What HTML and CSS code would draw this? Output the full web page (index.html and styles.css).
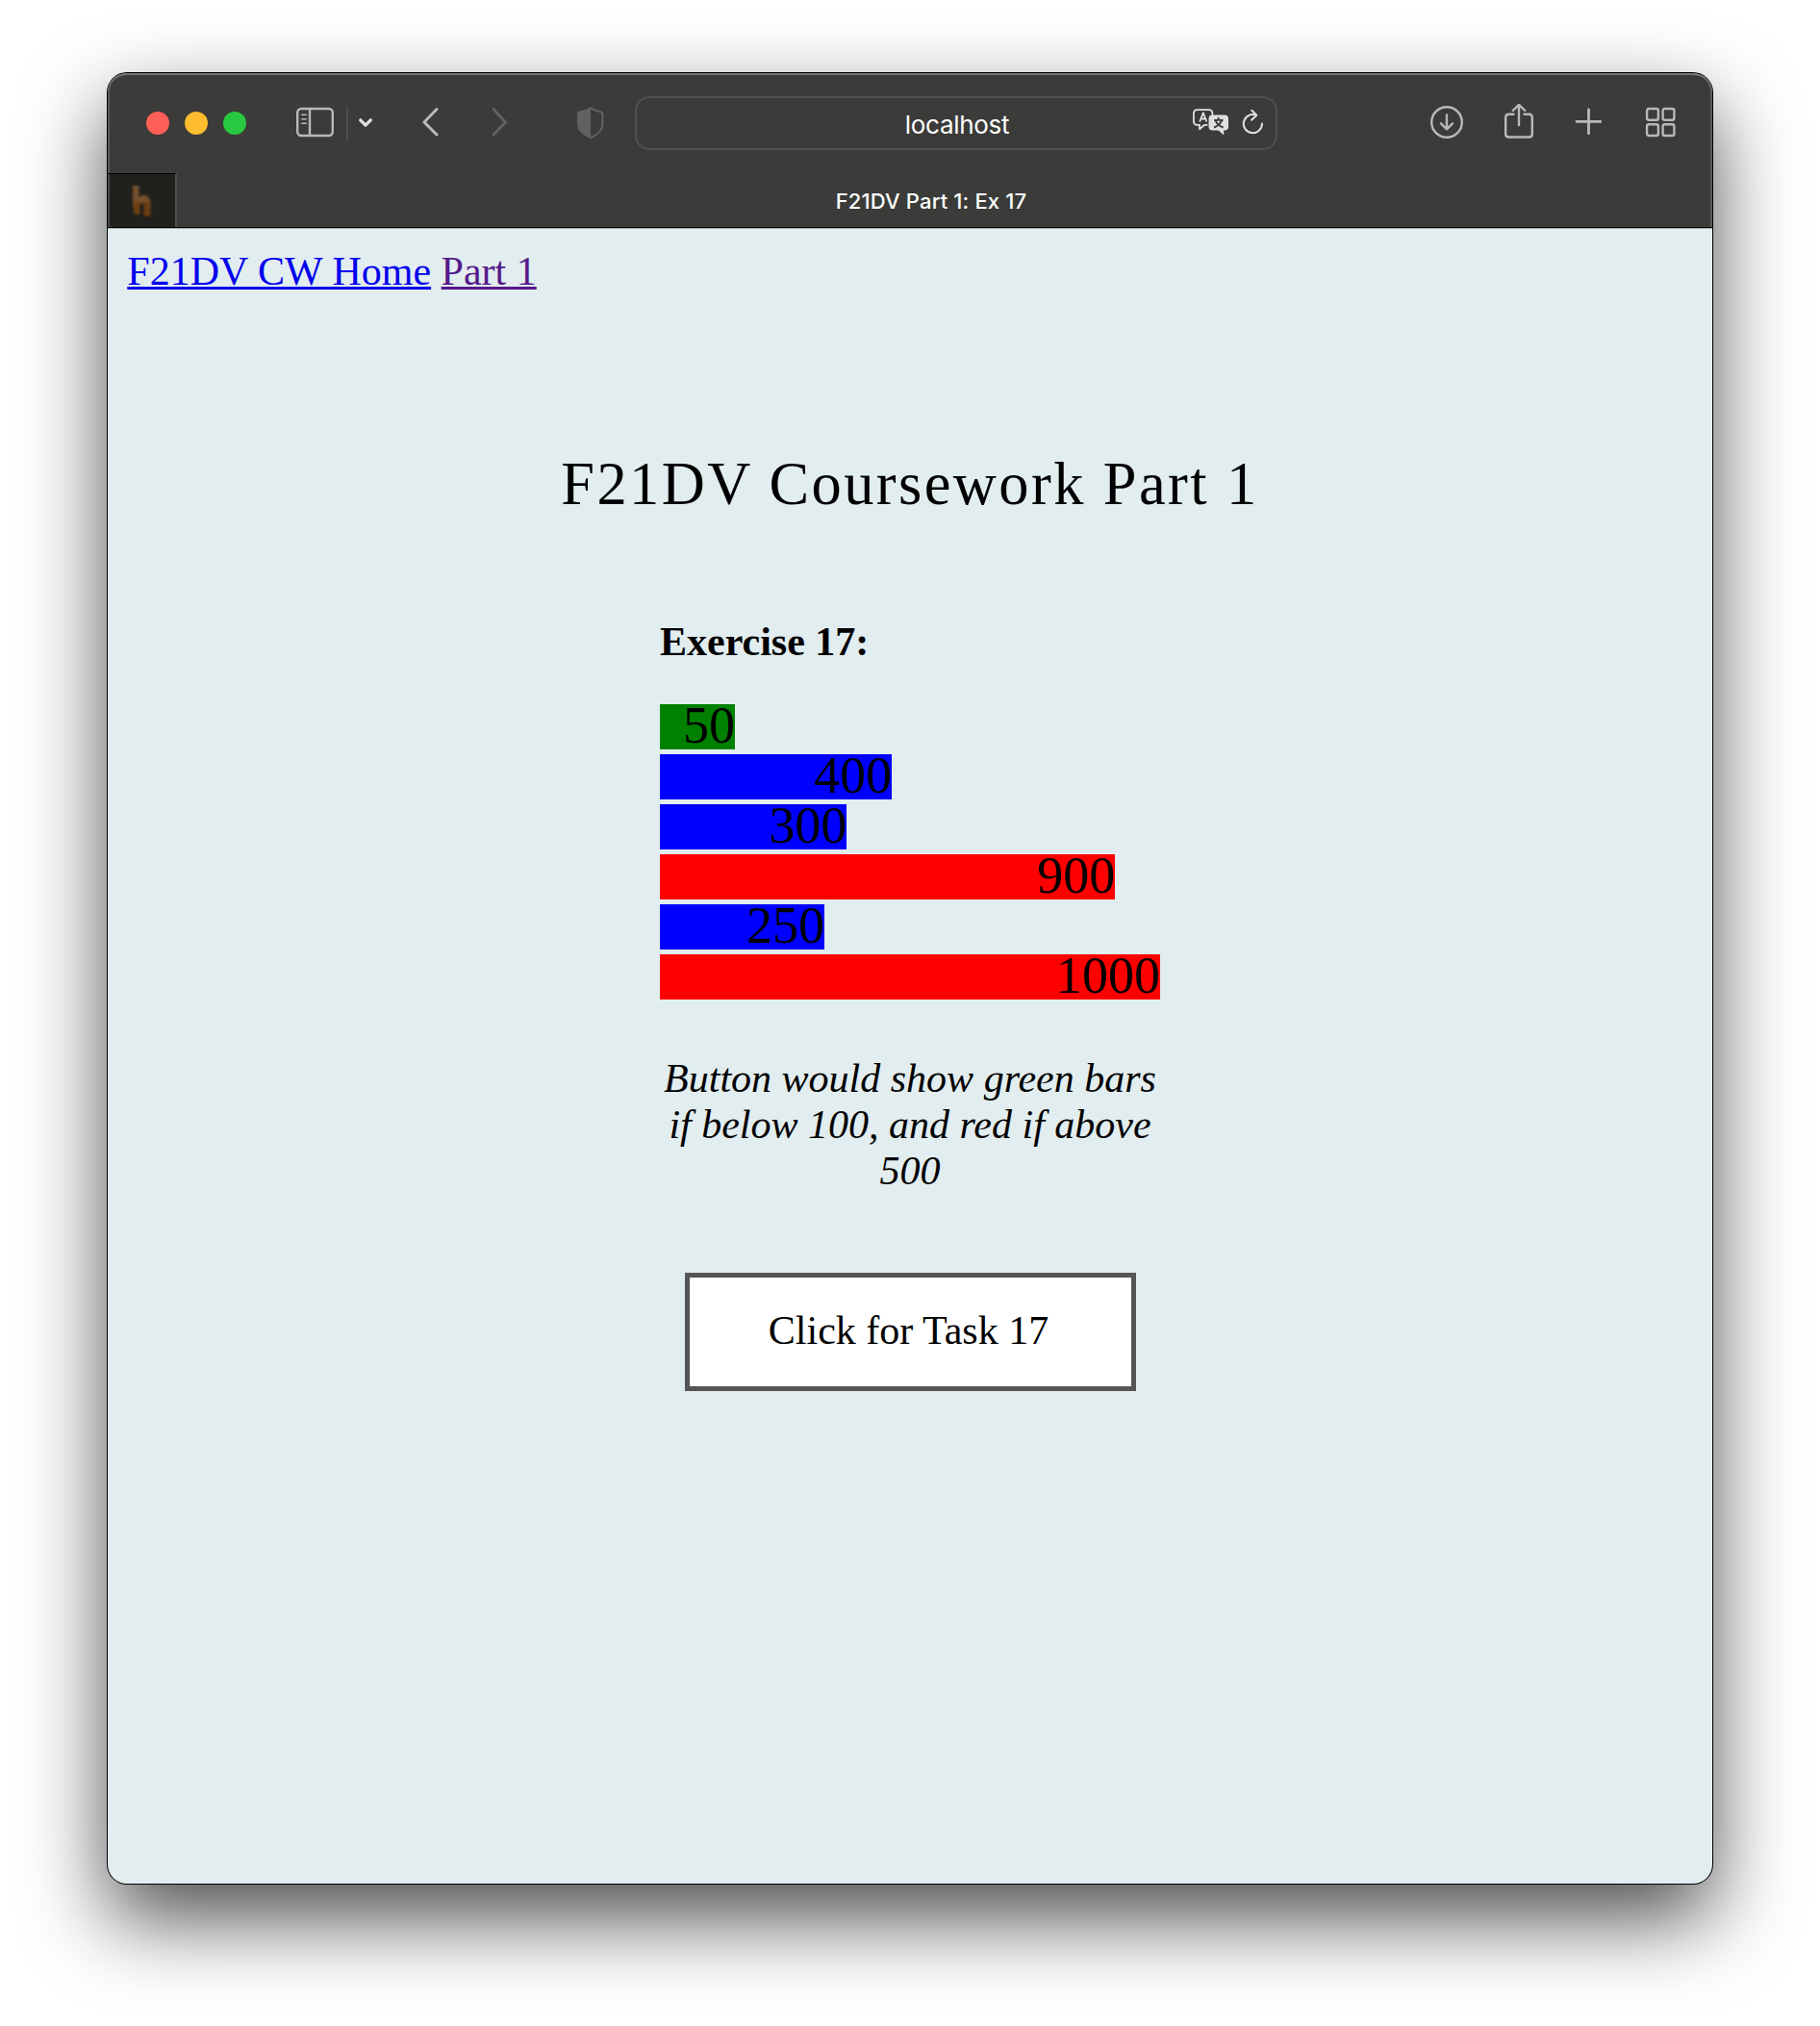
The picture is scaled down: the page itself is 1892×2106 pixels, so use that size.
FILE: index.html
```html
<!DOCTYPE html>
<html lang="en">
<head>
<meta charset="utf-8">
<title>F21DV Part 1: Ex 17</title>
<link rel="stylesheet" href="styles.css">
</head>
<body>
<div class="window">
  <header class="chrome">
    <div class="toolbar">
      <div class="lights">
        <span class="light close"></span>
        <span class="light minimise"></span>
        <span class="light expand"></span>
      </div>
      <svg class="icon sidebar" width="40" height="40" viewBox="0 0 40 40">
        <rect x="1.2" y="5" width="36.6" height="28" rx="4"/>
        <path d="M14 5v28"/>
        <path class="fine" d="M5.8 11.3h4.4M5.8 15.8h4.4M5.8 20.2h4.4"/>
      </svg>
      <span class="divider"></span>
      <svg class="icon chevron" width="16" height="40" viewBox="0 0 16 40"><path d="M2.700 16.800l5.300 5.400 5.300-5.400"/></svg>
      <svg class="icon back" width="18" height="40" viewBox="0 0 18 40"><path d="M15 5.500L2 19l13 13"/></svg>
      <svg class="icon forward dim" width="18" height="40" viewBox="0 0 18 40"><path d="M2 5.500L14.500 19 2 32"/></svg>
      <svg class="icon shield dim" width="28" height="40" viewBox="0 0 28 40">
        <path d="M14 4.300C10.500 6.500 6 7.800 2 8.400Q1 8.600 1 10v11c0 7 6 10.500 13 14.300C21 31.500 26.300 28 26.300 21V10q0-1.400-1-1.600C21.500 7.800 17.500 6.500 14 4.300z"/>
        <path class="solid" d="M14 3.500C10 6 5 7.500 1 8v13c0 7 6 10.500 13 14.500z"/>
      </svg>
      <div class="address">
        <span class="host">localhost</span>
        <svg class="translate" width="38" height="30" viewBox="0 0 38 30">
          <path class="line" d="M15.500 16.800H12.300L7 21.200v-4.400H4.800Q.9 16.800.9 12.900V5Q.9 1.100 4.800 1.100H16.500Q20.400 1.100 20.400 5v2"/>
          <path class="line" d="M7.200 13.500l3.600-9.300 3.600 9.300M8.400 10.500h4.800"/>
          <path class="fill" d="M20.500 6.500H33q4 0 4 4v8q0 4-4 4h-.8v5l-5.700-5h-6q-4 0-4-4v-8q0-4 4-4z"/>
          <path class="glyph" d="M26.700 8.900v2.300M22 11.900h9.600M23.600 12.300q2 5 8 7.200M30 12.300q-2 5-8 7.200"/>
        </svg>
        <svg class="reload" width="24" height="30" viewBox="0 0 24 30">
          <path d="M14.800 6.600A9.600 9.600 0 1 0 21 15.500M10.300 1.800l5 4.900-5.200 5"/>
        </svg>
      </div>
      <svg class="icon download" width="36" height="40" viewBox="0 0 36 40"><circle cx="18" cy="19" r="15.800"/><path d="M18 11.500v14.500M12 20.300l6 6 6-6"/></svg>
      <svg class="icon share" width="32" height="40" viewBox="0 0 32 40"><path d="M10.500 10.700H5.500q-3.300 0-3.300 3.300v17.200q0 3.300 3.300 3.300h21q3.300 0 3.300-3.300V14q0-3.300-3.300-3.300h-5"/><path d="M16 22V1.500M9.700 7L16 .8 22.300 7"/></svg>
      <svg class="icon plus" width="28" height="40" viewBox="0 0 28 40"><path d="M14.500 5.800v25M2 18.300h25"/></svg>
      <svg class="icon grid" width="32" height="40" viewBox="0 0 32 40"><rect x="2.100" y="5" width="11.800" height="11.800" rx="2"/><rect x="18.600" y="5" width="11.800" height="11.800" rx="2"/><rect x="2.100" y="21.200" width="11.800" height="11.800" rx="2"/><rect x="18.600" y="21.200" width="11.800" height="11.800" rx="2"/></svg>
    </div>
    <div class="tabs">
      <div class="pinned">
        <svg width="24" height="36" viewBox="0 0 24 36">
          <path fill="#74502e" d="M3 2h6.500v12q4-3.500 8-1.500 3.500 2 4 7V24H3z"/>
          <path fill="#6b3f12" d="M4 19h17.500v14.800H14.500V21.500l-4 1.500v8.800H4z"/>
          <path fill="#20201c" d="M10.500 22l4-2v6h-4z"/>
        </svg>
      </div>
      <div class="tab">F21DV Part 1: Ex 17</div>
    </div>
  </header>
  <main class="page">
    <nav class="crumbs"><a class="home" href="#">F21DV CW Home</a> <a class="part" href="#">Part 1</a></nav>
    <h1 class="title">F21DV Coursework Part 1</h1>
    <section class="exercise">
      <h2 class="name">Exercise 17:</h2>
      <div class="chart">
        <div class="bar low" style="width:78px">50</div>
        <div class="bar" style="width:241px">400</div>
        <div class="bar" style="width:194.400px">300</div>
        <div class="bar high" style="width:473.400px">900</div>
        <div class="bar" style="width:171px">250</div>
        <div class="bar high" style="width:520px">1000</div>
      </div>
      <p class="note">Button would show green bars if below 100, and red if above 500</p>
      <button class="action">Click for Task 17</button>
    </section>
  </main>
</div>
</body>
</html>
```
FILE: styles.css
```css
* { box-sizing: border-box; }
body { margin: 0; background: #fff; height: 2106px; overflow: hidden; display: flow-root; }

.window {
  width: 1668px;
  height: 1882px;
  margin: 76px auto 0;
  display: flex;
  flex-direction: column;
  border-radius: 20px;
  overflow: hidden;
  background: #e2edef;
  box-shadow: 0 0 0 1px #000, 0 36px 86px rgba(0, 0, 0, .7);
}

.chrome {
  flex: none;
  height: 161px;
  background: #3b3b39;
  border-bottom: 1px solid #000;
  box-shadow: inset 0 2px #747472, inset 2px 0 #5a5a58, inset -2px 0 #5a5a58;
  border-radius: 20px 20px 0 0;
}
.toolbar { display: flex; align-items: center; height: 104px; padding-left: 40px; }
.lights { display: flex; gap: 16px; }
.light { width: 24px; height: 24px; border-radius: 50%; }
.close { background: #ff5f57; }
.minimise { background: #febc2e; }
.expand { background: #28c840; }

.icon { flex: none; fill: none; stroke: #b9b9b7; stroke-width: 2.400; stroke-linecap: round; stroke-linejoin: round; }
.dim { stroke: #61615f; }
.fine { stroke-width: 1.600; }
.solid { fill: #61615f; stroke: none; }
.sidebar { margin-left: 52px; }
.divider { width: 2px; height: 36px; margin-left: 12px; background: #4d4d4b; }
.chevron { margin-left: 10px; stroke: #e2e2e0; stroke-width: 3.200; }
.back { margin-left: 51px; stroke-width: 3; }
.forward { margin-left: 54px; stroke-width: 2.800; }
.shield { margin-left: 71px; stroke-width: 2; }
.download { margin-left: 158px; }
.share { margin-left: 41px; }
.plus { margin-left: 42px; stroke-width: 2.800; }
.grid { margin-left: 45px; }

.address {
  display: flex;
  align-items: center;
  width: 668px;
  height: 56px;
  margin-left: 32px;
  padding-right: 11px;
  border: 2px solid #51514f;
  border-radius: 15px;
}
.host { flex: 1; padding: 3px 0 0 88px; text-align: center; color: #fff; font: 26px/32px Inter, sans-serif; letter-spacing: -.3px; }
.translate { fill: none; }
.line { stroke: #e0e0de; stroke-width: 1.800; stroke-linejoin: round; }
.fill { fill: #e0e0de; }
.glyph { stroke: #3b3b39; stroke-width: 1.900; }
.reload { margin-left: 13px; fill: none; stroke: #e0e0de; stroke-width: 2; stroke-linecap: round; stroke-linejoin: round; }

.tabs { display: flex; height: 56px; }
.pinned {
  display: flex;
  align-items: center;
  justify-content: center;
  width: 72px;
  border-top: 1px solid #000;
  border-right: 2px solid #51514f;
  background: #20201c;
  box-shadow: inset 2px 0 #4a4a48;
}
.pinned svg { filter: blur(.8px); }
.tab { flex: 1; padding: 1px 28px 0 0; text-align: center; color: #fff; font: 500 22px/56px Inter, sans-serif; letter-spacing: .15px; }

.page {
  flex: 1;
  display: flex;
  flex-direction: column;
  align-items: center;
  border-top: 1px solid #a9b3b5;
  color: #000;
  font: 42px/48px "Liberation Serif", serif;
}
.crumbs { align-self: stretch; padding: 20px 20.800px 0 20.300px; }
.crumbs a { text-decoration-thickness: 2.600px; text-underline-offset: 2px; text-decoration-skip-ink: none; }
.home { color: #0000ee; }
.part { color: #551a8b; }
.title { margin: 161px 0 0; font-size: 62.400px; line-height: 72px; font-weight: 400; letter-spacing: 2.430px; }
.exercise { display: flex; flex-direction: column; align-items: center; width: 520px; margin-top: 104px; }
.name { align-self: stretch; margin: 0; font-size: inherit; font-weight: 700; }
.chart { align-self: stretch; display: flex; flex-direction: column; gap: 5.200px; margin-top: 41px; }
.bar { height: 46.800px; background: #00f; text-align: right; font-size: 54.080px; line-height: 45.500px; white-space: nowrap; }
.low { background: #008000; }
.high { background: #f00; }
.note { margin: 58px 0 0; text-align: center; font-style: italic; }
.action {
  width: 469px;
  height: 123px;
  margin-top: 82px;
  padding: 0 3px 3px 0;
  border: 5px solid #555;
  background: #fff;
  color: #000;
  font: inherit;
}
```
